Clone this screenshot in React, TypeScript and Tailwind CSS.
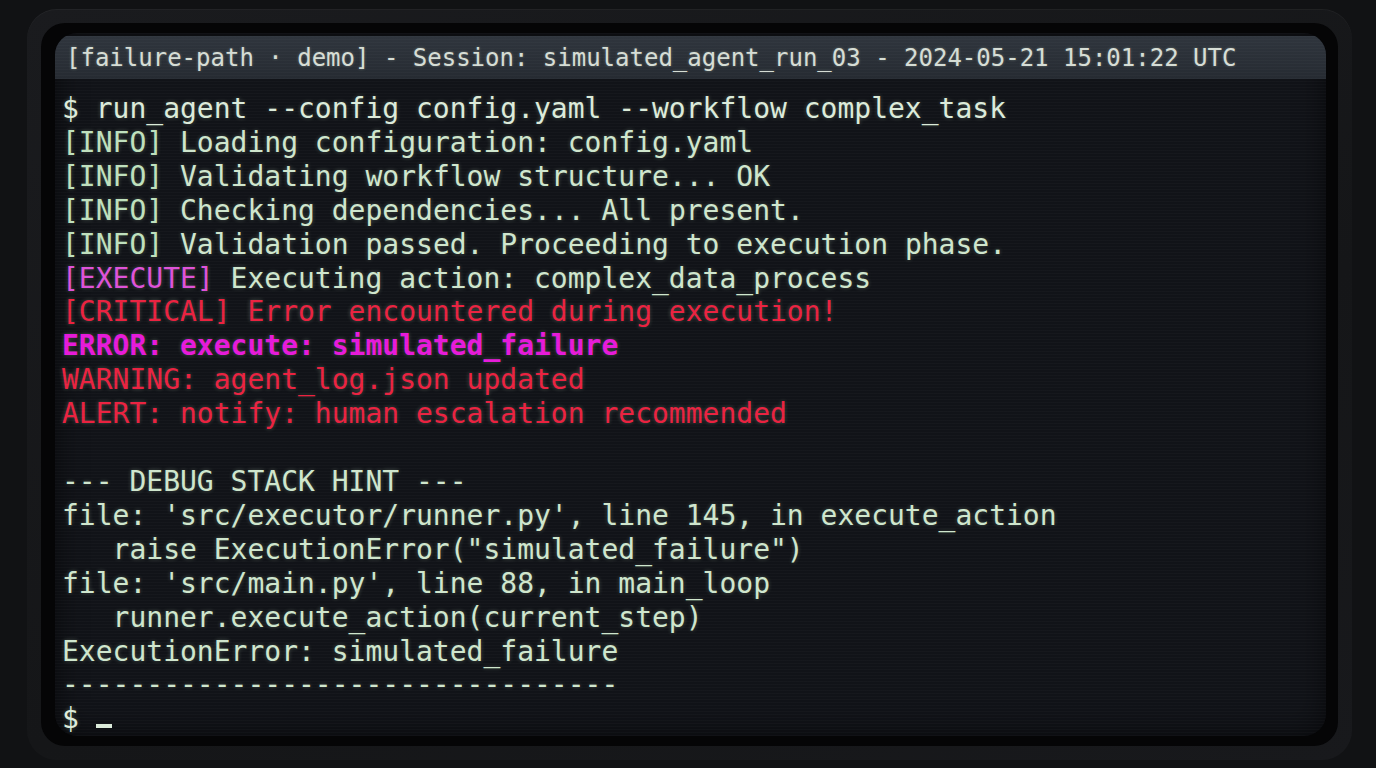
type Line = { parts: Array<{ text: string; className?: string }> };

const green = "text-[#cfe6cd]";
const info = "text-[#bfe0bd]";
const red = "text-[#ea2240]";
const magenta = "text-[#de52d8]";

const lines: Line[] = [
  { parts: [{ text: "$ run_agent --config config.yaml --workflow complex_task", className: "text-[#dcebda]" }] },
  { parts: [{ text: "[INFO]", className: info }, { text: " Loading configuration: config.yaml", className: green }] },
  { parts: [{ text: "[INFO]", className: info }, { text: " Validating workflow structure... OK", className: green }] },
  { parts: [{ text: "[INFO]", className: info }, { text: " Checking dependencies... All present.", className: green }] },
  { parts: [{ text: "[INFO]", className: info }, { text: " Validation passed. Proceeding to execution phase.", className: green }] },
  { parts: [{ text: "[EXECUTE]", className: magenta }, { text: " Executing action: complex_data_process", className: green }] },
  { parts: [{ text: "[CRITICAL] Error encountered during execution!", className: red }] },
  { parts: [{ text: "ERROR: execute: simulated_failure", className: "text-[#e61ad9] font-bold" }] },
  { parts: [{ text: "WARNING: agent_log.json updated", className: red }] },
  { parts: [{ text: "ALERT: notify: human escalation recommended", className: red }] },
  { parts: [{ text: "\u00a0" }] },
  { parts: [{ text: "--- DEBUG STACK HINT ---", className: green }] },
  { parts: [{ text: "file: 'src/executor/runner.py', line 145, in execute_action", className: green }] },
  { parts: [{ text: "   raise ExecutionError(\"simulated_failure\")", className: green }] },
  { parts: [{ text: "file: 'src/main.py', line 88, in main_loop", className: green }] },
  { parts: [{ text: "   runner.execute_action(current_step)", className: green }] },
  { parts: [{ text: "ExecutionError: simulated_failure", className: green }] },
  { parts: [{ text: "---------------------------------", className: green }] },
];

export default function App() {
  return (
    <div className="h-[768px] w-full bg-[#111214] pt-[9px] pb-[8px] pl-[27px] pr-[24px] overflow-hidden">
      <div className="h-full rounded-[30px] bg-[linear-gradient(160deg,#1a1b1e,#151618_60%,#18191c)] p-[14px] shadow-[inset_0_1px_0_rgba(255,255,255,0.04)]">
        <div className="h-full rounded-[24px] bg-[#050506] p-[10px] pl-[14px] pr-[12px]">
          <div className="relative h-full rounded-[22px] bg-[#111318] overflow-hidden pt-[3px] font-['DejaVu_Sans_Mono',monospace] shadow-[inset_0_0_30px_rgba(0,0,0,0.6)]">
            <div className="h-[43px] flex items-center bg-[linear-gradient(to_bottom,#2f353d,#262b32)] px-[11px] text-[24px] text-[#d6ddd5] whitespace-pre [text-shadow:0_0_3px_rgba(210,230,210,0.35)]">
              [failure-path · demo] - Session: simulated_agent_run_03 - 2024-05-21 15:01:22 UTC
            </div>
            <div className="pt-[13px] pl-[7px] text-[28px] leading-[33.9px] whitespace-pre [text-shadow:0_0_4px_rgba(200,230,200,0.3)]">
              {lines.map((line, i) => (
                <div key={i}>
                  {line.parts.map((p, j) => (
                    <span key={j} className={p.className}>{p.text}</span>
                  ))}
                </div>
              ))}
              <div className="flex items-center text-[#dcebda]">
                <span>$ </span>
                <span className="mt-[14px] inline-block h-[4px] w-[16px] bg-[#dcebda]" />
              </div>
            </div>
            <div className="pointer-events-none absolute inset-0 bg-[repeating-linear-gradient(to_bottom,rgba(255,255,255,0.018)_0px,rgba(255,255,255,0.018)_1px,transparent_1px,transparent_3px)]" />
          </div>
        </div>
      </div>
    </div>
  );
}
